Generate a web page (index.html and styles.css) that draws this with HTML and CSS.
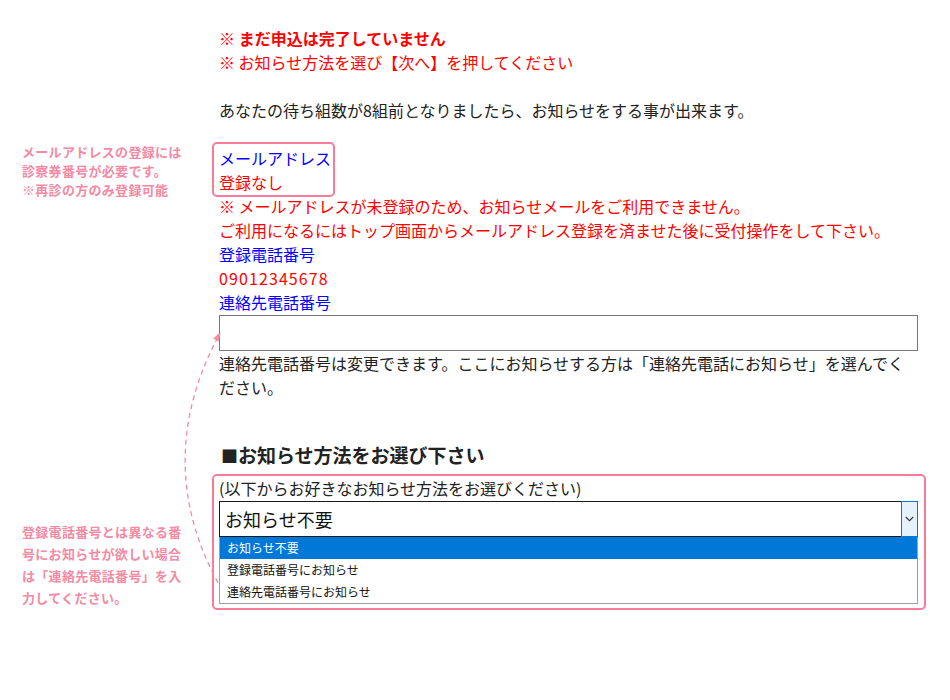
FILE: index.html
```html
<!DOCTYPE html>
<html lang="ja">
<head>
<meta charset="utf-8">
<title>お知らせ方法</title>
<link rel="stylesheet" href="styles.css">
</head>
<body>
<div class="page">
  <div class="note note-mail">メールアドレスの登録には<br>診察券番号が必要です。<br>※再診の方のみ登録可能</div>
  <div class="note note-tel">登録電話番号とは異なる番<br>号にお知らせが欲しい場合<br>は「連絡先電話番号」を入<br>力してください。</div>
  <svg class="arc" width="950" height="700" viewBox="0 0 950 700">
    <path d="M218 583 Q152 461 218.5 336" fill="none" stroke="#f58aa2" stroke-width="1.3" stroke-dasharray="5 4"/>
    <polygon points="220.5,332 219,341.5 213.2,338.5" fill="#f58aa2"/>
  </svg>

  <main class="main">
    <p class="red bold">※ まだ申込は完了していません</p>
    <p class="red">※ お知らせ方法を選び【次へ】を押してください</p>
    <p class="gap">あなたの待ち組数が8組前となりましたら、お知らせをする事が出来ます。</p>

    <div class="mailbox gap">
      <p class="blue">メールアドレス</p>
      <p class="red">登録なし</p>
    </div>
    <p class="red">※ メールアドレスが未登録のため、お知らせメールをご利用できません。</p>
    <p class="red">ご利用になるにはトップ画面からメールアドレス登録を済ませた後に受付操作をして下さい。</p>
    <p class="blue">登録電話番号</p>
    <p class="red digits">09012345678</p>
    <p class="blue">連絡先電話番号</p>
    <input class="tel" type="text" value="">
    <p>連絡先電話番号は変更できます。ここにお知らせする方は「連絡先電話にお知らせ」を選んでください。</p>

    <h3 class="heading"><span class="square">■</span>お知らせ方法をお選び下さい</h3>
    <div class="choose">
      <p>(以下からお好きなお知らせ方法をお選びください)</p>
      <div class="select">
        <span class="select-value">お知らせ不要</span>
        <span class="select-btn">
          <svg width="9" height="6" viewBox="0 0 9 6"><path d="M0.8 1 L4.5 4.7 L8.2 1" fill="none" stroke="#333" stroke-width="1.1"/></svg>
        </span>
      </div>
      <ul class="options">
        <li class="opt active">お知らせ不要</li>
        <li class="opt">登録電話番号にお知らせ</li>
        <li class="opt">連絡先電話番号にお知らせ</li>
      </ul>
    </div>
  </main>
</div>
</body>
</html>
```

FILE: styles.css
```css
html, body {
  margin: 0;
  padding: 0;
  background: #ffffff;
}

body {
  font-family: "Noto Sans CJK JP", "Noto Sans", sans-serif;
  color: #222222;
  font-size: 16px;
}

.page {
  position: relative;
  width: 950px;
  height: 700px;
  overflow: hidden;
}

.main {
  margin-left: 219px;
  width: 699px;
  padding-top: 26px;
}

p {
  margin: 0;
  line-height: 24px;
}

.red { color: #ff0000; }
.blue { color: #0000ff; }
.bold { font-weight: bold; }
.gap { margin-top: 24px; }
.digits { letter-spacing: 1.1px; }

.mailbox {
  position: relative;
  width: max-content;
}

.mailbox::before {
  content: "";
  position: absolute;
  left: -7px;
  top: -4px;
  right: -4px;
  bottom: -3px;
  border: 2px solid #fb7c98;
  border-radius: 5px;
}

.tel {
  display: block;
  box-sizing: border-box;
  width: 699px;
  height: 36px;
  margin: 1px 0 0 0;
  border: 1px solid #767676;
  padding: 0 4px;
  font: inherit;
  background: #fff;
}

.heading {
  margin: 43px 0 0 0;
  font-size: 19px;
  line-height: 26px;
  font-weight: bold;
  color: #222222;
}

.square {
  display: inline-block;
  margin-left: 2px;
  font-size: 17px;
  width: 17px;
}

.choose {
  margin: 5px 0 0 -7px;
  width: 699px;
  padding: 0 6px 4px 5px;
  border: 2px solid #fb7c98;
  border-radius: 5px;
}

.select {
  box-sizing: border-box;
  margin-top: 1px;
  height: 36px;
  display: flex;
  align-items: stretch;
  border: 1px solid #1a1a1a;
  border-right: none;
  background: #fff;
}

.select-value {
  flex: 1;
  padding-left: 5px;
  font-size: 18px;
  line-height: 34px;
  color: #111;
}

.select-btn {
  width: 15px;
  display: flex;
  align-items: center;
  justify-content: center;
  background: #e5f1fb;
  border: 1px solid #0078d7;
  margin-top: -1px;
  margin-bottom: -1px;
}

.options {
  list-style: none;
  margin: 0;
  padding: 0;
  border: 1px solid #a0a0a0;
  border-top: none;
  background: #fff;
}

.opt {
  height: 22px;
  line-height: 22px;
  padding-left: 7px;
  font-size: 12px;
  color: #111;
}

.opt.active {
  background: #0078d7;
  color: #ffffff;
}

.note {
  position: absolute;
  left: 22px;
  font-size: 13px;
  font-weight: bold;
  letter-spacing: 0.3px;
  color: #f48aa3;
  white-space: nowrap;
}

.note-mail {
  top: 142px;
  line-height: 19px;
}

.note-tel {
  top: 521px;
  line-height: 22px;
}

.arc {
  position: absolute;
  left: 0;
  top: 0;
  pointer-events: none;
}
```
